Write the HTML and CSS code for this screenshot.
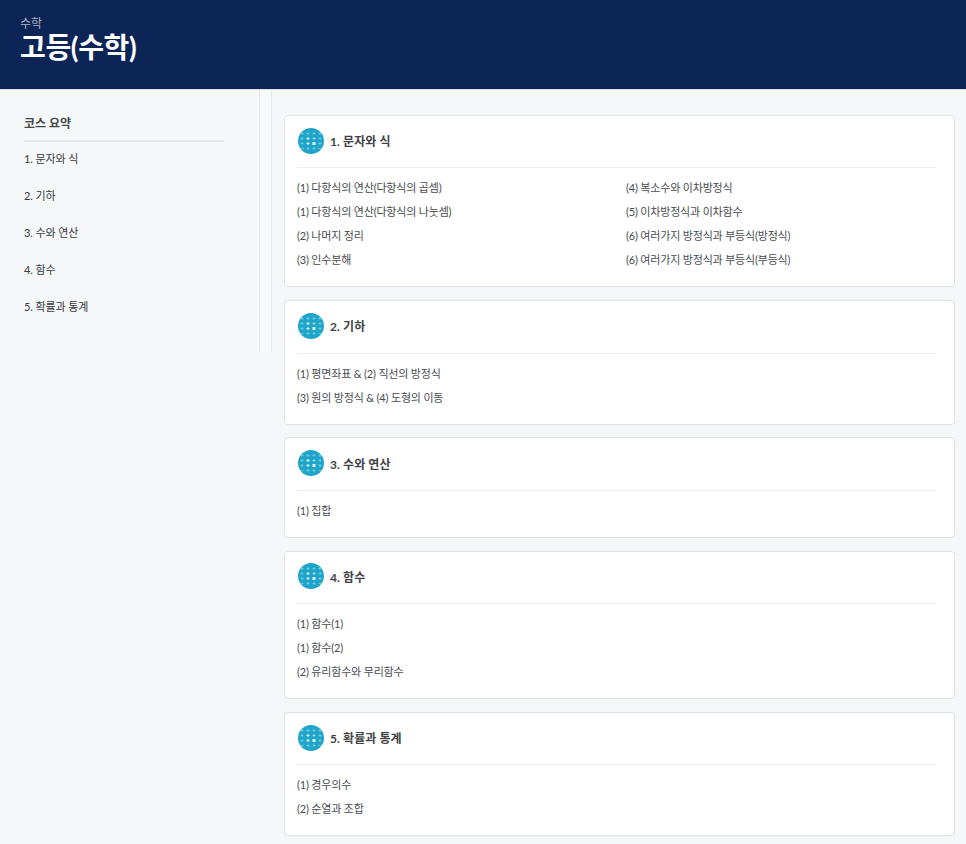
FILE: index.html
```html
<!DOCTYPE html>
<html lang="ko">
<head>
<meta charset="utf-8">
<title>고등(수학)</title>
<link rel="stylesheet" href="styles.css">
</head>
<body>
<svg class="defs" width="0" height="0" aria-hidden="true">
  <symbol id="badge" viewBox="0 0 26 26">
    <circle cx="13" cy="13" r="13" fill="#1fa5c9"/>
    <g stroke="#74cbe1" stroke-width="0.9" fill="none">
      <path d="M2.500 5.500h3M4 4v3M14.500 5.500h3M16 4v3M20.500 5.500h3M22 4v3M8.500 5.500h3M10 4v3"/>
      <path d="M2.500 10.500h3M4 9v3M20.500 10.500h3M22 9v3M2.500 15.500h3M4 14v3M20.500 15.500h3M22 14v3"/>
      <path d="M8.500 20.500h3M10 19v3M14.500 20.500h3M16 19v3M3 20.500h2.500M20.500 20.500h2.500"/>
    </g>
    <g stroke="#a4dfec" stroke-width="0.9" fill="none">
      <path d="M14.500 10.500h3M16 9v3"/>
    </g>
    <g stroke="#ffffff" stroke-width="0.9" fill="none">
      <path d="M8.500 10.500h3M10 9v3M8.500 15.500h3M10 14v3"/>
    </g>
    <rect x="14.500" y="14" width="3" height="3" fill="#dff4f9"/>
  </symbol>
</svg>
<header class="top">
  <div class="crumb">수학</div>
  <h1 class="title">고등(수학)</h1>
</header>
<div class="page">
  <aside class="side">
    <nav class="summary">
      <h2 class="summary-title">코스 요약</h2>
      <ul class="summary-list">
        <li>1. 문자와 식</li>
        <li>2. 기하</li>
        <li>3. 수와 연산</li>
        <li>4. 함수</li>
        <li>5. 확률과 통계</li>
      </ul>
    </nav>
    <div class="rail"></div>
  </aside>
  <main class="main">
    <section class="card">
      <div class="card-head"><svg class="badge"><use href="#badge"/></svg><h3 class="card-title">1. 문자와 식</h3></div>
      <div class="lessons two">
        <ul>
          <li>(1) 다항식의 연산(다항식의 곱셈)</li>
          <li>(1) 다항식의 연산(다항식의 나눗셈)</li>
          <li>(2) 나머지 정리</li>
          <li>(3) 인수분해</li>
        </ul>
        <ul>
          <li>(4) 복소수와 이차방정식</li>
          <li>(5) 이차방정식과 이차함수</li>
          <li>(6) 여러가지 방정식과 부등식(방정식)</li>
          <li>(6) 여러가지 방정식과 부등식(부등식)</li>
        </ul>
      </div>
    </section>
    <section class="card">
      <div class="card-head"><svg class="badge"><use href="#badge"/></svg><h3 class="card-title">2. 기하</h3></div>
      <div class="lessons">
        <ul>
          <li>(1) 평면좌표 &amp; (2) 직선의 방정식</li>
          <li>(3) 원의 방정식 &amp; (4) 도형의 이동</li>
        </ul>
      </div>
    </section>
    <section class="card">
      <div class="card-head"><svg class="badge"><use href="#badge"/></svg><h3 class="card-title">3. 수와 연산</h3></div>
      <div class="lessons">
        <ul>
          <li>(1) 집합</li>
        </ul>
      </div>
    </section>
    <section class="card">
      <div class="card-head"><svg class="badge"><use href="#badge"/></svg><h3 class="card-title">4. 함수</h3></div>
      <div class="lessons">
        <ul>
          <li>(1) 함수(1)</li>
          <li>(1) 함수(2)</li>
          <li>(2) 유리함수와 무리함수</li>
        </ul>
      </div>
    </section>
    <section class="card">
      <div class="card-head"><svg class="badge"><use href="#badge"/></svg><h3 class="card-title">5. 확률과 통계</h3></div>
      <div class="lessons">
        <ul>
          <li>(1) 경우의수</li>
          <li>(2) 순열과 조합</li>
        </ul>
      </div>
    </section>
  </main>
</div>
</body>
</html>
```
FILE: styles.css
```css
* { box-sizing: border-box; }
html, body { margin: 0; padding: 0; }
body {
  background: #f6f7f9;
  color: #373a3c;
  font-family: Lato, "Noto Sans CJK KR", "Noto Sans", sans-serif;
  font-size: 11px;
  overflow: hidden;
  height: 844px;
}
ul { list-style: none; margin: 0; padding: 0; }
h1, h2, h3 { margin: 0; }
.defs { position: absolute; }

.top {
  height: 90px;
  background: #0c2556;
  border-bottom: 1px solid #d9dde3;
  padding: 16px 20px 0;
}
.crumb {
  color: #aab3c7;
  font-size: 12px;
  line-height: 16px;
  margin-bottom: 1px;
}
.title {
  color: #fff;
  font-size: 28px;
  font-weight: 700;
  letter-spacing: -0.35px;
  line-height: 28px;
}

.page { display: flex; align-items: flex-start; }

.side { display: flex; width: 272px; flex: none; }
.summary { width: 260px; height: 262px; padding: 25px 35px 0 24px; border-right: 1px solid #e8eaee; }
.rail { width: 12px; height: 262px; background: #f8f9fb; border-right: 1px solid #e8eaee; }
.summary-title {
  font-size: 12px;
  font-weight: 700;
  line-height: 18px;
  padding-bottom: 7px;
  border-bottom: 2px solid #e4e6ea;
  color: #45484b;
}
.summary-list { letter-spacing: -0.1px; }
.summary-list li { height: 37px; line-height: 33px; }

.main {
  flex: 1;
  min-width: 0;
  padding: 25px 11px 0 12px;
  display: flex;
  flex-direction: column;
  gap: 12.94px;
}
.card {
  background: #fff;
  border: 1px solid #dfe2e7;
  border-radius: 4px;
  padding: 0 18px 14px 12px;
}
.card-head {
  display: flex;
  align-items: center;
  gap: 6px;
  height: 52.3px;
  padding-bottom: 2px;
  margin-bottom: 8px;
  border-bottom: 1px solid #eceef1;
}
.badge { width: 26px; height: 26px; margin-left: 1px; flex: none; }
.card-title { font-size: 12px; font-weight: 700; letter-spacing: 0.1px; color: #3f4245; }
.lessons.two { display: grid; grid-template-columns: 329px 1fr; }
.lessons li { height: 24px; line-height: 24px; color: #484b4f; letter-spacing: -0.18px; }
```
